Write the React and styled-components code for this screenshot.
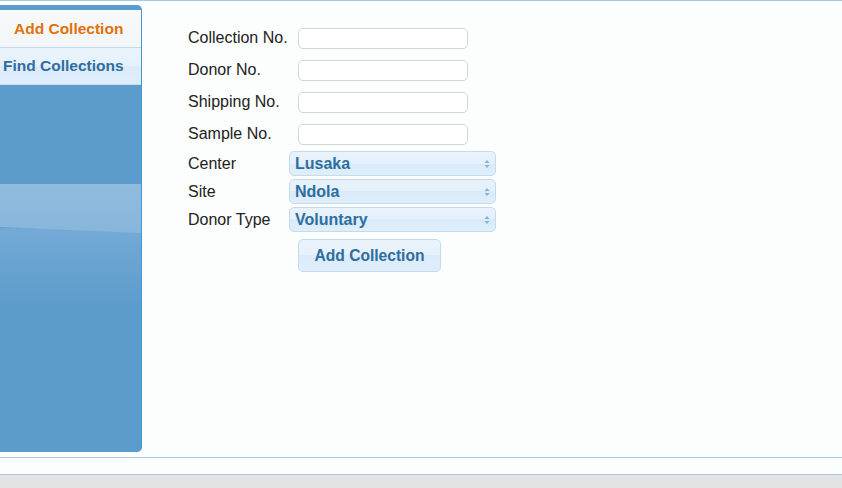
import React from "react";
import styled, { createGlobalStyle } from "styled-components";

const Global = createGlobalStyle`
  html, body { margin: 0; padding: 0; }
  body {
    background: #e3e3e3;
    font-family: "Liberation Sans", Arial, sans-serif;
  }
`;

const Page = styled.div`
  width: 842px;
  background: #fcfdfd;
`;

const Frame = styled.div`
  padding-top: 4px;
  box-sizing: border-box;
  height: 458px;
  border-top: 1px solid #a6c9e2;
  border-bottom: 1px solid #a6c9e2;
  display: flex;
  align-items: flex-start;
`;

const Sidebar = styled.div`
  position: relative;
  width: 142px;
  height: 447px;
  box-sizing: border-box;
  border-right: 1px solid #4297d7;
  border-radius: 0 5px 5px 0;
  overflow: hidden;
  padding-top: 5px;
  background: linear-gradient(
    to bottom,
    #5c9ccc 0,
    #5c9ccc 222px,
    #75aad6 224px,
    #5c9ccc 300px,
    #5c9ccc 100%
  );
  &::before {
    content: "";
    position: absolute;
    left: 0;
    right: 0;
    top: 179px;
    height: 49px;
    background: linear-gradient(to bottom, #90bcde, #88b6db);
    clip-path: polygon(0 0, 100% 0, 100% 100%, 0 88%);
  }
`;

const TabList = styled.div`
  position: relative;
  z-index: 1;
  display: flex;
  flex-direction: column;
`;

const Tab = styled.div`
  height: ${(p) => (p.$active ? "37px" : "38px")};
  box-sizing: border-box;
  display: flex;
  align-items: center;
  padding-left: ${(p) => p.$indent}px;
  font-size: 15.5px;
  font-weight: bold;
  white-space: nowrap;
  color: ${(p) => (p.$active ? "#e17009" : "#2e6e9e")};
  background: ${(p) =>
    p.$active
      ? "linear-gradient(to bottom, #f7f9fa, #f3f6f8)"
      : "linear-gradient(to bottom, #e9f3fc 0, #e6f1fb 50%, #dbebf9 50%, #dfeefb 100%)"};
  border-top: ${(p) => (p.$active ? "none" : "1px solid #c5dbec")};
  border-bottom: ${(p) => (p.$active ? "none" : "1px solid #c5dbec")};
`;

const Main = styled.div`
  padding: 17px 0 0 46px;
  display: flex;
  flex-direction: column;
`;

const TextGrid = styled.div`
  display: grid;
  grid-template-columns: 110px 170px;
  grid-auto-rows: 32px;
  align-items: center;
`;

const SelectGrid = styled.div`
  margin-top: 1px;
  display: grid;
  grid-template-columns: 101px 207px;
  grid-auto-rows: 25px;
  row-gap: 3px;
  align-items: center;
`;

const Label = styled.label`
  font-size: 16px;
  color: #222;
  white-space: nowrap;
`;

const Input = styled.input`
  width: 170px;
  height: 21px;
  box-sizing: border-box;
  border: 1px solid #d2d6d8;
  border-radius: 5px;
  background: #fff;
  padding: 0 4px;
  font-family: inherit;
  outline: none;
`;

const SelectBox = styled.div`
  width: 207px;
  height: 25px;
  box-sizing: border-box;
  border: 1px solid #c5dbec;
  border-radius: 5px;
  background: linear-gradient(
    to bottom,
    #e7f2fc 0,
    #e4f0fb 50%,
    #d9eaf9 50%,
    #dfeefb 100%
  );
  display: flex;
  align-items: center;
  justify-content: space-between;
  padding: 0 5px 0 5px;
  font-size: 16px;
  font-weight: bold;
  color: #2e6e9e;
`;

const Button = styled.button`
  margin: 7px 0 0 110px;
  width: 143px;
  height: 33px;
  box-sizing: border-box;
  border: 1px solid #c5dbec;
  border-radius: 5px;
  background: linear-gradient(
    to bottom,
    #eaf3fc 0,
    #e6f1fb 50%,
    #dbebf9 50%,
    #e0eefb 100%
  );
  font-family: "Liberation Sans", Arial, sans-serif;
  font-size: 15.6px;
  font-weight: bold;
  color: #2e6e9e;
  padding: 0;
  cursor: pointer;
`;

const Footer = styled.div`
  height: 16px;
  border-bottom: 1px solid #a6c9e2;
  background: #fcfdfd;
`;

const Arrows = () => (
  <svg width="6" height="8" viewBox="0 0 6 8">
    <path d="M3 0 L5.5 3 L0.5 3 Z" fill="#7fb2dc" />
    <path d="M3 8 L5.5 5 L0.5 5 Z" fill="#7fb2dc" />
  </svg>
);

const textFields = ["Collection No.", "Donor No.", "Shipping No.", "Sample No."];
const selects = [
  ["Center", "Lusaka"],
  ["Site", "Ndola"],
  ["Donor Type", "Voluntary"],
];

export default function App() {
  return (
    <>
      <Global />
      <Page>
        <Frame>
          <Sidebar>
            <TabList>
              <Tab $active $indent={14}>Add Collection</Tab>
              <Tab $indent={3}>Find Collections</Tab>
            </TabList>
          </Sidebar>
          <Main>
            <TextGrid>
              {textFields.map((l) => (
                <React.Fragment key={l}>
                  <Label>{l}</Label>
                  <Input type="text" />
                </React.Fragment>
              ))}
            </TextGrid>
            <SelectGrid>
              {selects.map(([l, v]) => (
                <React.Fragment key={l}>
                  <Label>{l}</Label>
                  <SelectBox>
                    <span>{v}</span>
                    <Arrows />
                  </SelectBox>
                </React.Fragment>
              ))}
            </SelectGrid>
            <div>
              <Button>Add Collection</Button>
            </div>
          </Main>
        </Frame>
        <Footer />
      </Page>
    </>
  );
}
